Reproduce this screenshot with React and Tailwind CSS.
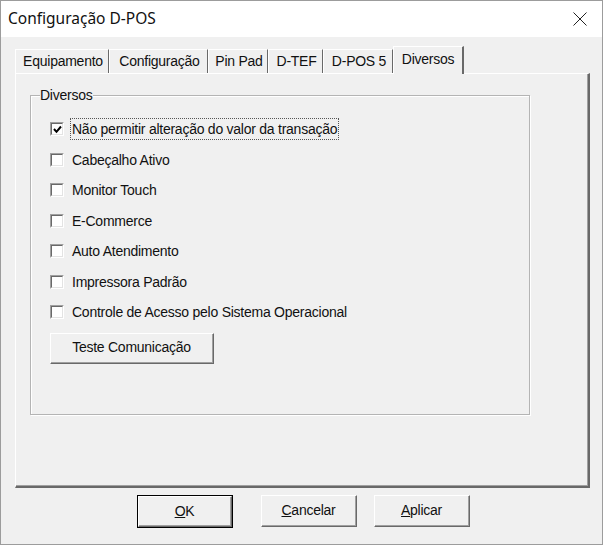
import React from 'react';

const rows = [
  { label: 'Não permitir alteração do valor da transação', checked: true, focus: true },
  { label: 'Cabeçalho Ativo' },
  { label: 'Monitor Touch' },
  { label: 'E-Commerce' },
  { label: 'Auto Atendimento' },
  { label: 'Impressora Padrão' },
  { label: 'Controle de Acesso pelo Sistema Operacional' },
];

const tabs = [
  { label: 'Equipamento', w: 'w-[94px]' },
  { label: 'Configuração', w: 'w-[99px]' },
  { label: 'Pin Pad', w: 'w-[60px]' },
  { label: 'D-TEF', w: 'w-[55px]' },
  { label: 'D-POS 5', w: 'w-[70px]' },
];

const Checkbox = ({ checked }) => (
  <div className="w-[14px] h-[14px] border-t border-l border-[#a0a0a0] border-r border-b border-r-white border-b-white">
    <div className="w-full h-full border-t border-l border-[#696969] border-r border-b border-r-[#e3e3e3] border-b-[#e3e3e3] bg-white flex items-center justify-center">
      {checked && (
        <svg width="9" height="9" viewBox="0 0 9 9">
          <path d="M1 4 L3.5 6.8 L8 1.5" fill="none" stroke="#000" strokeWidth="2" />
        </svg>
      )}
    </div>
  </div>
);

const Button = ({ children, className = '', isDefault }) => (
  <div className={`${className} ${isDefault ? 'border border-black' : ''} bg-[#f0f0f0]`}>
    <div className="w-full h-full border-t border-l border-white border-r border-b border-r-[#696969] border-b-[#696969]">
      <div className="w-full h-full border-r border-b border-r-[#a0a0a0] border-b-[#a0a0a0] flex items-center justify-center">
        {children}
      </div>
    </div>
  </div>
);

export default function App() {
  return (
    <div className="w-[608px] h-[548px] bg-white" style={{ fontFamily: '"Liberation Sans", Arial, sans-serif' }}>
      <div className="w-[603px] h-[545px] border border-[#9c9c9c] bg-[#f0f0f0] flex flex-col text-[14px] text-[#111] tracking-[-0.25px]">
        {/* title bar */}
        <div className="h-[36px] bg-white flex items-center justify-between pl-[7px] pr-[15px]">
          <span className="text-[15.5px] tracking-normal" style={{ fontFamily: '"Noto Sans", "Open Sans", sans-serif' }}>
            Configuração D-POS
          </span>
          <svg width="14" height="14" viewBox="0 0 14 14">
            <path d="M0.5 0.5 L13.5 13.5 M13.5 0.5 L0.5 13.5" stroke="#222" strokeWidth="1" />
          </svg>
        </div>

        <div className="pl-[14px] pt-[9px]">
          {/* tabs */}
          <div className="flex items-end h-[27px]">
            {tabs.map((t) => (
              <div
                key={t.label}
                className={`${t.w} h-[24px] border-t border-l border-white border-r border-r-[#696969] flex items-center justify-center pl-[2px]`}
              >
                {t.label}
              </div>
            ))}
            <div className="w-[71px] h-[28px] -mb-[1px] relative z-10 bg-[#f0f0f0] border-t border-l border-white border-r-2 border-r-[#696969] flex items-center justify-center pb-[3px]">
              Diversos
            </div>
          </div>

          {/* panel */}
          <div className="w-[575px] h-[415px] border-t border-l border-white border-r-2 border-b-2 border-r-[#696969] border-b-[#696969] shadow-[inset_-1px_-1px_0_#a0a0a0]">
            <div className="pl-[14px] pt-[21px]">
              <div className="relative w-[500px] h-[320px] border border-[#b4b4b4] shadow-[1px_1px_0_#fff,inset_1px_1px_0_#fff]">
                <span className="absolute left-[9px] -top-[9px] bg-[#f0f0f0] pr-[1px] leading-[16px]">Diversos</span>
                <div className="pl-[19px] pt-[18px] flex flex-col">
                  {rows.map((r) => (
                    <div key={r.label} className="h-[30.5px] flex items-center">
                      <Checkbox checked={r.checked} />
                      <span
                        className={`ml-[7px] px-[1px] leading-[20px] ${r.focus ? 'outline outline-1 outline-dotted outline-[#555]' : ''}`}
                      >
                        {r.label}
                      </span>
                    </div>
                  ))}
                  <Button className="w-[164px] h-[31px] mt-[5px]">Teste Comunicação</Button>
                </div>
              </div>
            </div>
          </div>

          {/* footer buttons */}
          <div className="flex pt-[7px] pl-[122px]">
            <Button isDefault className="w-[96px] h-[33px]">
              <span><u>O</u>K</span>
            </Button>
            <Button className="w-[96px] h-[32px] ml-[28px]">
              <span><u>C</u>ancelar</span>
            </Button>
            <Button className="w-[96px] h-[32px] ml-[17px]">
              <span><u>A</u>plicar</span>
            </Button>
          </div>
        </div>
      </div>
    </div>
  );
}
